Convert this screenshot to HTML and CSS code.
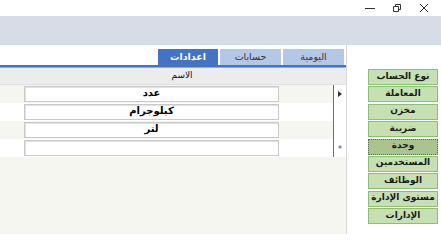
FILE: index.html
```html
<!DOCTYPE html>
<html lang="ar">
<head>
<meta charset="utf-8">
<link rel="stylesheet" href="styles.css">
</head>
<body>
<div class="titlebar">
  <span class="ctl"><svg width="10" height="10" viewBox="0 0 10 10"><path d="M0 5.5h10" stroke="#333" stroke-width="1"/></svg></span>
  <span class="ctl"><svg width="10" height="10" viewBox="0 0 10 10"><path d="M1.5 3.5h5v5h-5z M3.5 3.5v-2h5v5h-2" fill="none" stroke="#333" stroke-width="1"/></svg></span>
  <span class="ctl"><svg width="10" height="10" viewBox="0 0 10 10"><path d="M1 1l8 8M9 1l-8 8" stroke="#333" stroke-width="1"/></svg></span>
</div>
<div class="band"></div>
<div class="main">
  <div class="left">
    <div class="tabs">
      <div class="tab">اليومية</div>
      <div class="tab">حسابات</div>
      <div class="tab active">اعدادات</div>
    </div>
    <div class="tabline"></div>
    <div class="grid">
      <div class="ghead">
        <div class="gh-ind"></div>
        <div class="gh-col">الاسم</div>
      </div>
      <div class="rows">
        <div class="row alt"><div class="ind"><span class="arrow"></span></div><div class="cellwrap"><div class="cell">عدد</div></div></div>
        <div class="row"><div class="ind"></div><div class="cellwrap"><div class="cell">كيلوجرام</div></div></div>
        <div class="row alt"><div class="ind"></div><div class="cellwrap"><div class="cell">لتر</div></div></div>
        <div class="row"><div class="ind"><span class="star">*</span></div><div class="cellwrap"><div class="cell"></div></div></div>
      </div>
    </div>
  </div>
  <div class="right">
    <div class="btn">نوع الحساب</div>
    <div class="btn">المعاملة</div>
    <div class="btn">مخزن</div>
    <div class="btn">ضريبة</div>
    <div class="btn sel">وحدة</div>
    <div class="btn">المستخدمين</div>
    <div class="btn">الوظائف</div>
    <div class="btn">مستوى الإدارة</div>
    <div class="btn">الإدارات</div>
  </div>
</div>
</body>
</html>
```
FILE: styles.css
```css
* { box-sizing: border-box; }
html, body { margin: 0; padding: 0; }
body {
  width: 441px;
  height: 234px;
  overflow: hidden;
  background: #ffffff;
  font-family: "DejaVu Sans", "Liberation Sans", sans-serif;
  direction: ltr;
}
.titlebar {
  height: 16px;
  display: flex;
  justify-content: flex-end;
  align-items: center;
  padding-right: 12px;
  gap: 17px;
}
.ctl { display: flex; width: 10px; height: 10px; }
.band {
  height: 29px;
  background: #d6dde6;
}
.main {
  display: flex;
  height: 189px;
}
.left {
  width: 347px;
  display: flex;
  flex-direction: column;
  border-right: 1px solid #d8d8d8;
}
.tabs {
  display: flex;
  flex-direction: row-reverse;
  justify-content: flex-start;
  gap: 2px;
  padding: 4px 2px 0 0;
  height: 20px;
}
.tab {
  width: 61px;
  height: 16px;
  background: #b4c7e7;
  color: #333;
  font-size: 9.5px;
  display: flex;
  align-items: center;
  justify-content: center;
  direction: rtl;
  padding-bottom: 2px;
}
.tab.active {
  width: 60px;
  background: #4472c4;
  color: #fff;
  font-weight: bold;
}
.tabline {
  height: 3px;
  background: #4472c4;
  border-bottom: 1px solid #8fa9d8;
}
.grid {
  flex: 1;
  display: flex;
  flex-direction: column;
  background: #f5f6ef;
}
.ghead {
  height: 17px;
  background: #ececec;
  display: flex;
  flex-direction: row-reverse;
  border-bottom: 1px solid #e0e0e0;
}
.gh-ind { width: 13px; }
.gh-col {
  width: 310px;
  text-align: center;
  font-size: 9px;
  line-height: 15px;
  color: #111;
  direction: rtl;
  padding-left: 8px;
}
.rows { display: flex; flex-direction: column; }
.row {
  height: 18px;
  display: flex;
  flex-direction: row-reverse;
  background: #ffffff;
}
.row.alt { background: #f5f6ef; }
.ind {
  width: 13px;
  background: #fff;
  border-left: 1px solid #707070;
  display: flex;
  align-items: center;
  justify-content: center;
}
.arrow {
  width: 0; height: 0;
  border-top: 3.5px solid transparent;
  border-bottom: 3.5px solid transparent;
  border-left: 4px solid #333;
}
.star { font-size: 9px; color: #555; line-height: 1; margin-top: 3px; }
.cellwrap {
  flex: 1;
  display: flex;
  align-items: center;
  padding-left: 24px;
  padding-right: 54px;
}
.cell {
  flex: 1;
  height: 16px;
  background: #fff;
  border: 1px solid #c9c9c9;
  box-shadow: inset 1px 1px 0 #e2e2e2;
  font-size: 10px;
  font-weight: bold;
  color: #000;
  text-align: center;
  line-height: 12px;
  direction: rtl;
}
.right {
  flex: 1;
  display: flex;
  flex-direction: column;
  gap: 1.4px;
  padding: 24px 3px 0 21px;
}
.btn {
  height: 16px;
  background: #c6e0b4;
  border: 1px solid #8cc06c;
  font-size: 9px;
  font-weight: bold;
  color: #1a1a1a;
  display: flex;
  align-items: center;
  justify-content: center;
  direction: rtl;
  line-height: 11px;
  padding-bottom: 2px;
}
.btn.sel {
  background: #a9c48f;
  border: 1px dotted #556b45;
}
```
